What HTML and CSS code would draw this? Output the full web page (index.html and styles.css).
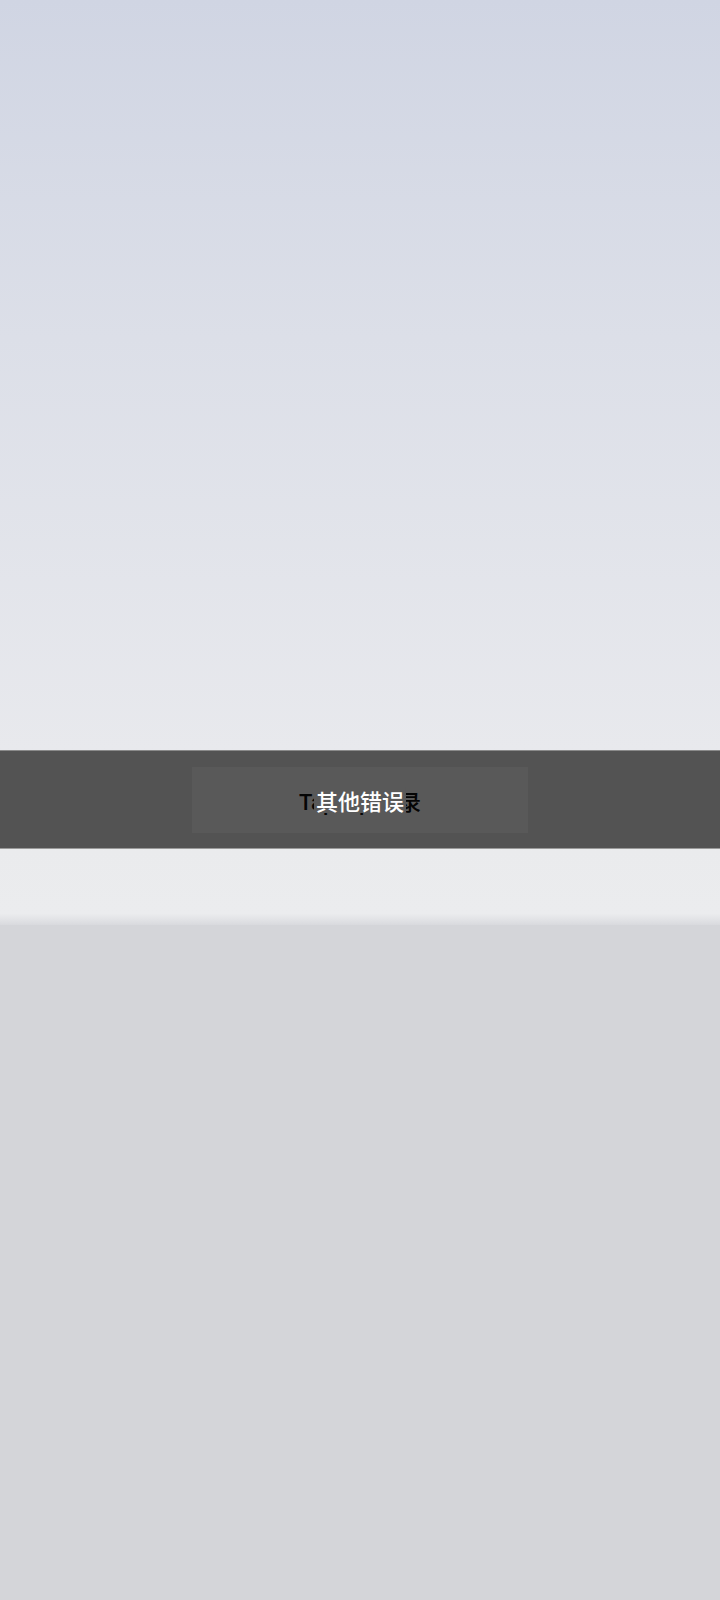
FILE: index.html
```html
<!DOCTYPE html>
<html lang="zh-CN">
<head>
    <meta charset="UTF-8">
    <meta name="viewport" content="width=device-width, initial-scale=1.0">
    <title>登录</title>
    <link rel="stylesheet" href="styles.css">
</head>
<body>
    <div class="screen">
        <div class="sky"></div>

        <div class="toast-band">
            <div class="toast-box">
                <span class="login-label">TapTap 登录</span>
                <span class="error-label">其他错误</span>
            </div>
        </div>

        <div class="strip"></div>
        <div class="ground"></div>
    </div>
</body>
</html>
```

FILE: styles.css
```css
body {
    margin: 0;
    font-family: 'Roboto', 'Noto Sans CJK SC', sans-serif;
    background-color: #d4d5d9;
}

.screen {
    display: flex;
    flex-direction: column;
    width: 720px;
    height: 1600px;
    overflow: hidden;
}

.sky {
    height: 750px;
    background: linear-gradient(to bottom, #d0d5e3 0%, #dcdfe8 45%, #e8e9ed 100%);
}

.toast-band {
    height: 99px;
    box-sizing: border-box;
    background-color: #535353;
    border-top: 1px solid #8a8a8a;
    border-bottom: 1px solid #9a9a9a;
    display: flex;
    justify-content: center;
    padding-top: 16px;
}

.toast-box {
    position: relative;
    width: 336px;
    height: 66px;
    background-color: #595959;
    display: flex;
    justify-content: center;
    align-items: center;
}

.login-label {
    color: #050505;
    font-size: 22px;
    font-weight: 500;
}

.error-label {
    position: absolute;
    top: 50%;
    left: 50%;
    transform: translate(-50%, -50%);
    color: #ffffff;
    font-size: 22px;
    font-weight: 500;
    line-height: 26px;
    padding: 0 2px;
    background-color: #595959;
    font-family: 'Noto Sans CJK SC', sans-serif;
}

.strip {
    height: 76px;
    background: linear-gradient(to bottom, #eaebed 0%, #ebecee 85%, #d9dade 100%);
}

.ground {
    flex: 1;
    background-color: #d4d5d9;
}
```
